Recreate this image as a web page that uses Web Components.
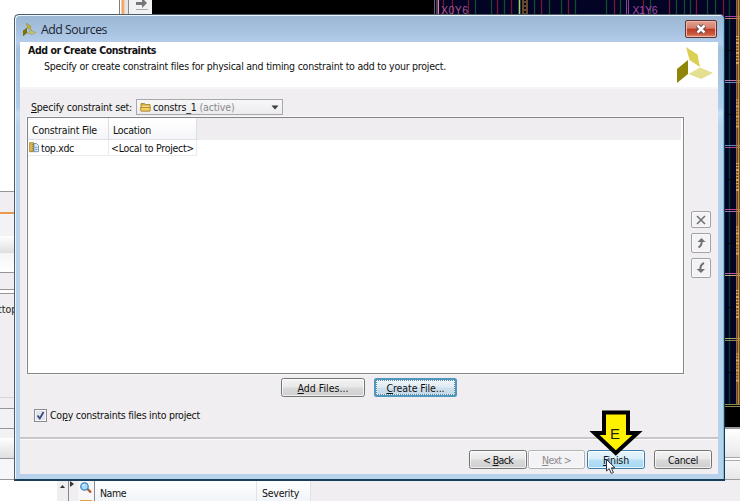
<!DOCTYPE html>
<html lang="en"><head><meta charset="utf-8"><title>Add Sources</title>
<style>
html,body{margin:0;padding:0}
body{width:740px;height:501px;overflow:hidden;background:#f0eef0;font-family:"DejaVu Sans Condensed","DejaVu Sans",sans-serif;font-stretch:condensed;font-size:10.5px;color:#111}
</style></head><body>
<app-desktop></app-desktop>
<script>
class Base extends HTMLElement{
  constructor(){super();this.attachShadow({mode:'open'});}
  connectedCallback(){this.shadowRoot.innerHTML='<style>*{box-sizing:border-box}:host{box-sizing:border-box;display:block}</style>'+this.view();this.ready&&this.ready();}
}
/* Single line of text, tracked so that it fills a given width */
customElements.define('ui-text',class extends Base{
  view(){return `<style>:host{display:inline-block;white-space:pre;line-height:14px;flex:none}</style><span><slot></slot></span>`}
  ready(){
    const w=+this.getAttribute('w');if(!w)return;
    const n=this.textContent.length,now=this.shadowRoot.querySelector('span').getBoundingClientRect().width;
    if(now)this.style.letterSpacing=((w-now)/n)+'px';
    this.style.width=w+'px';
  }
});
customElements.define('ui-button',class extends Base{
  view(){return `<style>
  :host{height:19px;border:1px solid #747376;border-radius:2.5px;background:linear-gradient(#f5f4f5,#e9e8e9 48%,#dbdadb 52%,#cfcecf);box-shadow:inset 0 0 0 1px #ffffffb0;display:flex;align-items:center;justify-content:center;flex:none}
  :host([disabled]){color:#8d8b8e;border-color:#b3b1b4;background:#f3f2f4}
  :host([hot]){border-color:#3c7fa8;background:linear-gradient(#e9f5fc,#d6edfa 48%,#b9e0f7 52%,#a6d5f0)}
  :host([focus]){border:2px solid #4f97bd;background:linear-gradient(#eff5fa,#dfebf4 48%,#cfe0ed 52%,#c5d9e8);outline:1px dotted #5b87a3;outline-offset:-3px}
  </style><slot></slot>`}
});
customElements.define('tool-button',class extends Base{
  view(){return `<style>:host{width:20px;height:20px;border:1px solid #a3a1a4;border-radius:2px;background:#f3f2f4;box-shadow:inset 0 0 0 1px #faf9fa;display:flex;align-items:center;justify-content:center}</style><slot></slot>`}
});
customElements.define('xilinx-mark',class extends Base{
  view(){return `<style>:host svg{display:block;width:100%;height:100%}</style><svg viewBox="0 0 36 36" preserveAspectRatio="none"><path d="M9 0L20.500 7.500L23 20L12.500 13Z" fill="#dcd052"/><path d="M0 22L11 13V27L0 36Z" fill="#8f8508"/><path d="M11.500 27L23 20.500L36 26L24 32Z" fill="#e5df90"/></svg>`}
});
customElements.define('title-bar',class extends Base{
  view(){return `<style>:host{height:27px;display:flex;align-items:center;padding:3px 0 0 1px;font:12.300px "Open Sans","Noto Sans",sans-serif;color:#1b2430}
  xilinx-mark{width:13px;height:13px;filter:saturate(1.2) brightness(.85) drop-shadow(0 0 .5px #443f00);margin:-1px 5px 0 2px}
  .x{margin:-2px 1px 0 auto;width:32px;height:18px;border:1px solid #593536;border-radius:2px;box-shadow:inset 0 0 0 1px #efb5a8;background:linear-gradient(#e3a08f,#d5806d 45%,#bd3b22 50%,#c9573c 80%,#dd8b69);display:flex;justify-content:center;align-items:center}</style>
  <xilinx-mark></xilinx-mark><ui-text w="66">Add Sources</ui-text><div class="x"><svg width="14" height="12" viewBox="0 0 14 12"><path d="M3.500 2.500l7 7M10.500 2.500l-7 7" stroke="#583d45" stroke-width="4.400"/><path d="M3.500 2.500l7 7M10.500 2.500l-7 7" stroke="#fff" stroke-width="2.500"/></svg></div>`}
});
customElements.define('page-header',class extends Base{
  view(){return `<style>:host{height:45px;background:#fff;display:flex;justify-content:space-between;padding:1px 5px 0 8px}
  b{font-size:10.500px;display:block;height:16px}.d{padding-left:16px}xilinx-mark{width:36px;height:36px;margin-top:4px}</style>
  <div><b><ui-text w="128">Add or Create Constraints</ui-text></b><div class="d"><ui-text w="402">Specify or create constraint files for physical and timing constraint to add to your project.</ui-text></div></div><xilinx-mark></xilinx-mark>`}
});
customElements.define('set-picker',class extends Base{
  view(){return `<style>:host{display:flex;align-items:center;height:30px;padding:8px 0 0 11px;border-top:2px solid #f6f5f7}
  .c{margin-left:4px;width:147px;height:16px;border:1px solid #aaa8ab;background:linear-gradient(#f8f7f8,#ececee);display:flex;align-items:center;padding:0 3px}
  .c svg{flex:none}.g{color:#8b898c}.a{margin-left:auto}</style>
  <ui-text w="101"><u>S</u>pecify constraint set:</ui-text>
  <div class="c"><svg width="11" height="10" viewBox="0 0 11 10" style="margin-right:2px"><path d="M1 3V1.500h3.500l1 1H10V9H1z" fill="#d6aa35" stroke="#9a741c" stroke-width=".7"/><path d="M1.800 3.700h7.500v1H1.800z" fill="#fff4b8"/><path d="M.5 5.500h10L9.800 9H1z" fill="#f3d264" stroke="#a77d1e" stroke-width=".7"/></svg><ui-text w="46.500">constrs_1 </ui-text><ui-text class="g" w="35">(active)</ui-text><svg class="a" width="8" height="5"><path d="M.5.5h7L4 4.500z" fill="#3b3b3f"/></svg></div>`}
});
customElements.define('file-table',class extends Base{
  view(){return `<style>:host{width:657px;height:257px;border:1px solid #858487;background:#fff;flex:none;box-shadow:0 0 0 1px #f8f7f8}
  .r{display:grid;grid-template-columns:81px 88px 1fr;align-items:center}
  .h{height:22px;background:#efedef;border-right:2px solid #fff}
  .h div{height:22px;padding:5px 0 0 4px;border-right:1px solid #dedde1;border-bottom:1px solid #e0dfe3;background:linear-gradient(#fff,#fbfbfc 45%,#f4f5f8)}
  .b{height:16px}.b div{height:16px;display:flex;align-items:center;padding-left:2px;border-right:1px solid #ebebed;border-bottom:1px solid #ebebed}</style>
  <div class="r h"><div><ui-text w="65">Constraint File</ui-text></div><div><ui-text w="38">Location</ui-text></div></div>
  <div class="r b"><div style="padding-left:1px"><svg width="11" height="11" viewBox="0 0 11 11" style="margin-right:1px"><path d="M.7.700h3.800v9H.7z" fill="#edc24d" stroke="#927020" stroke-width=".8"/><path d="M2.500 2.500h2M2.500 4.500h2M2.500 6.500h2M2.500 8.300h2" stroke="#8c6b1d" stroke-width=".7"/><path d="M5 1.500h2.500l2 2v6.200H5z" fill="#d9eafa" stroke="#5688b5" stroke-width=".8"/><path d="M6 5.500h2.500M6 7.500h2.500" stroke="#5688b5" stroke-width=".7"/></svg><ui-text w="33">top.xdc</ui-text></div><div style="padding-left:2px"><ui-text w="83">&lt;Local to Project&gt;</ui-text></div></div>`}
});
customElements.define('wizard-dialog',class extends Base{
  view(){return `<style>
  :host{width:711px;height:467px;border:1px solid #4d5c69;border-right-color:#123b55;border-bottom:2px solid #173f59;border-radius:5px 5px 0 0;padding:0 6px 6px 5px;box-shadow:inset 1px 1px 0 #eaf5fc,inset -1px 0 0 #74bfdc;
  background:linear-gradient(#9bb6d1,#a9c4e2 18px,#b3cdea 28px,#a3bfdd 35px,#b1cce9 92px,#c6dff5 98px,#b9d2ec 110px)}
  .body{height:387px;background:#f0eef0;display:flex;flex-direction:column}
  .mid{display:flex;padding-left:7px}
  .tools{width:33px;padding:94px 0 0 7px;display:flex;flex-direction:column;gap:5px}
  .tools tool-button:first-child{height:17px}
  .acts{display:flex;gap:9px;padding:4px 0 0 261px;height:34px}
  .chk{display:flex;align-items:center;gap:3px;padding-left:14px;height:14px}
  .box{width:13px;height:13px;border:1px solid #8b8b91;background:#e3e4e9;box-shadow:inset 0 0 0 1px #f7f7f9}
  .box svg{display:block}
  hr{margin:15px 0 0;border:0;height:3px;background:#c8c6c9;border-bottom:1px solid #fbfbfb;width:100%}
  .foot{display:flex;padding:10px 6px 0 0;justify-content:flex-end}
  </style>
  <title-bar></title-bar><page-header></page-header>
  <div class="body"><set-picker></set-picker>
   <div class="mid"><file-table></file-table><div class="tools">
    <tool-button><svg width="12" height="12" viewBox="0 0 12 12"><path d="M2 2l8 8M10 2l-8 8" stroke="#737175" stroke-width="1.600"/></svg></tool-button>
    <tool-button><svg width="12" height="14" viewBox="0 0 12 14"><path d="M3.500 11.500Q7.500 9 6.500 4" fill="none" stroke="#737175" stroke-width="2"/><path d="M2.500 6L6.500 2l4 4z" fill="#737175"/></svg></tool-button>
    <tool-button><svg width="12" height="14" viewBox="0 0 12 14"><path d="M9 2Q4.500 4 5.500 10" fill="none" stroke="#737175" stroke-width="2"/><path d="M1.500 8h8.500L6 12z" fill="#737175"/></svg></tool-button></div></div>
   <div class="acts"><ui-button style="width:84px"><ui-text w="51"><u>A</u>dd Files...</ui-text></ui-button><ui-button focus style="width:83px"><ui-text w="58"><u>C</u>reate File...</ui-text></ui-button></div>
   <div class="chk"><div class="box"><svg width="11" height="11"><path d="M2.500 5.500L4.800 8.500L8.500 2" fill="none" stroke="#34467e" stroke-width="1.700"/></svg></div><ui-text w="150">Co<u>p</u>y constraints files into project</ui-text></div>
   <hr><div class="foot"><ui-button style="width:58px"><ui-text w="30">&lt; <u>B</u>ack</ui-text></ui-button><ui-button disabled style="width:57px;margin-left:1px"><ui-text w="29"><u>N</u>ext &gt;</ui-text></ui-button><ui-button hot style="width:58px;margin-left:2px"><ui-text w="26"><u>F</u>inish</ui-text></ui-button><ui-button style="width:58px;margin-left:9px"><ui-text w="30">Cancel</ui-text></ui-button></div>
  </div>`}
});
/* Device floorplan: vertical routing columns and clock region edges */
customElements.define('device-view',class extends Base{
  view(){
    const r='#741a31',g='#134d2c';
    const cols=[[443,r],[452,r],[468,r],[475,g],[491,g],[497,r],[504,g],[511,r],[534,g],[541,r],[549,g],[561,g],[568,r],[575,g],[606,g],[614,r],[620,g],[643,r],[650,g],[669,r],[676,g],[684,g],[690,g],[696,r],[707,g],[715,g],[723,r]];
    const rows=[[16,'#a340a8','#b77a65'],[80,'#bd789f','#7180c0'],[145,'#6488bd','#b04889'],[209,'#bd4890','#9b73a4'],[273,'#bb599c','#c9a974'],[338,'#aba95c','#8d8854'],[404,'#898b3a','#89875c']];
    return `<style>:host{width:588px;height:428px;background:#000;overflow:hidden}svg{display:block}</style><svg width="588" height="428" viewBox="152 0 588 428" font-family="Liberation Sans" font-size="10.500">
    <rect x="435" width="305" height="404" fill="#030326"/><path d="M434.500 0V20" stroke="#62606a"/><path d="M437 0V20" stroke="#ad6981"/><path d="M438.500 0V20" stroke="#d48ca0"/>
    ${cols.map(c=>`<path d="M${c[0]+.5} 0V16" stroke="${c[1]}" stroke-width="1.300"/>`).join('')}
    <path d="M519.500 0V16" stroke="#9bd36c" stroke-width="1.600"/><path d="M523 0V16M527 0V16" stroke="#9e6d2c" stroke-width="1.300"/><path d="M525 1V16" stroke="#c19240" stroke-dasharray="2 2"/>
    <path d="M626.500 0V16M628.500 0V16" stroke="#8c4193"/>
    <path d="M729.500 0V404" stroke="#0b3a2b" stroke-width="1.500"/>
    ${rows.map(r=>`<path d="M725 ${r[0]+.5}H740" stroke="${r[1]}"/><path d="M725 ${r[0]+2.500}H740" stroke="${r[2]}"/><path d="M725 ${r[0]+34.500}H740" stroke="#00000c" stroke-width="1"/>`).join('')}
    <path d="M736.500 0V404" stroke="#9c6a2c" stroke-width="1"/><path d="M738.500 0V404" stroke="#cb8f3b" stroke-width="2"/><path d="M737.500 36V404" stroke="#dda650" stroke-width="3" stroke-dasharray="1 2 1 2 2 2 1 2 1 2 2 2 1 2 1 2 2 35.500"/>
    <text x="441" y="14" fill="#a5598b" textLength="27">X0Y6</text><text x="632.500" y="14" fill="#a649ac" textLength="25">X1Y6</text></svg>`}
});
customElements.define('side-strip',class extends Base{
  view(){return `<style>:host{width:14px;height:480px;overflow:hidden;background:#f0eef0;display:flex;flex-direction:column;font-size:10.500px;color:#222}div{flex:none}ui-text{margin-left:-2px}</style>
  <div style="height:191px;background:#fff"></div><div style="height:21px;border-top:1px solid #969597"></div><div style="height:2px;background:#e99a4d"></div><div style="height:22px;background:#f3f2f4"></div><div style="height:17px;background:linear-gradient(#fff,#dededf)"></div><div style="height:19px;background:linear-gradient(#f6f5f6,#fff)"></div><div style="height:17px;border-top:1px solid #969597"></div><div style="height:4px;border-top:1px solid #969597;background:#fff"></div><div style="height:104px;border-top:1px solid #969597;padding:8px 0 0 0"><ui-text>ttop</ui-text></div><div style="height:11px;border-top:1px solid #d6d5d7"></div><div style="height:20px;border-top:1px solid #969597;background:#f2f1f3"></div><div style="height:30px;border-top:1px solid #969597;background:linear-gradient(#f2f1f3 9px,#fff 9px,#dfdee0)"></div><div style="height:22px;border-top:1px solid #969597;background:#f7f6f8;border-bottom:1px solid #969597"></div>`}
});
customElements.define('message-list',class extends Base{
  view(){return `<style>:host{height:21px;display:flex;background:#f0eef0}.w{width:57px;background:#fff}.s{width:12px;border-right:1px solid #89888b;display:flex;justify-content:center;padding-top:4px}.t{width:9px}.i{width:17px;background:#f7f6f8;border-right:1px solid #89888b}.h{padding-left:5px;padding-top:6px;background:linear-gradient(#fff,#f1f4f8);border-right:1px solid #e2e2e5;height:21px}svg{display:block;flex:none}</style>
  <div class="w"></div><div class="s"><svg width="7" height="5"><path d="M1 4L3.500 1 6 4z" fill="#333"/></svg></div><div class="t"><svg width="6" height="8"><path d="M1 1v6l4-3z" fill="#333"/></svg></div>
  <div class="i"><svg width="17" height="21"><path d="M8.500 8L13 12.500" stroke="#b45b36" stroke-width="2.400"/><circle cx="6.500" cy="6.500" r="3.700" fill="#a9dcf8" stroke="#3f86c8" stroke-width="1.300"/><path d="M4.500 6l2-2" stroke="#fff"/><path d="M2 20h12v1H2z" fill="#d9a441"/></svg></div>
  <div class="h" style="width:162px"><ui-text w="26">Name</ui-text></div><div class="h" style="width:54px"><ui-text w="37">Severity</ui-text></div>`}
});
customElements.define('app-desktop',class extends Base{
  view(){return `<style>
  :host{position:relative;width:740px;height:501px;overflow:hidden;background:#f0eef0}
  side-strip,.tabs,device-view,.corner,message-list,wizard-dialog,.ptr,.tag{position:absolute}
  side-strip{left:0;top:0}.tabs{left:0;top:0;width:152px;height:15px;background:#fff;display:flex;justify-content:flex-end}
  .bar{width:10px;border-left:1px solid #7e7d80;border-right:1px solid #8a898c;background:linear-gradient(90deg,#fff 1px,#ee9c54 2px,#f4b47c 4px,#e7e5e8 5px)}
  .tool{width:23px;background:#f2f1f3;border-bottom:1px solid #fff}
  device-view{left:152px;top:0}.corner{left:725px;top:427px;width:15px;height:53px;border-top:2px solid #9a999c;border-bottom:1px solid #9c9b9e;background:linear-gradient(#fff,#ededef 22px,#e4e3e5 28px,#aaa 28px,#aaa 29px,#fff 29px,#fff 31px,#aaa 31px,#aaa 32px,#f7f6f8 32px,#e7e6e9)}
  message-list{left:0;top:480px;width:740px}wizard-dialog{left:14px;top:14px}.tag{left:589px;top:408px}.ptr{left:605px;top:458px}
  </style><side-strip></side-strip><div class="tabs"><div class="bar"></div><div class="tool"><svg width="20" height="14" style="display:block;margin-left:7px"><path d="M0 2h6v-4l5 5-5 5V5H0z" fill="#77767a"/><path d="M0 9.500h12" stroke="#aaa"/></svg></div></div>
  <device-view></device-view><div class="corner"></div><message-list></message-list><wizard-dialog></wizard-dialog>
  <svg class="tag" width="54" height="50" viewBox="0 0 54 50"><path d="M15 4.500H39V25H48.500L26.800 45L5.500 25H15Z" fill="#fff200" stroke="#000" stroke-width="4"/><text x="21" y="31" font-family="Liberation Sans" font-size="15.500" fill="#222" textLength="10" lengthAdjust="spacingAndGlyphs">E</text></svg>
  <svg class="ptr" width="14" height="18" viewBox="0 0 14 18"><path d="M1.500 1.500V13l2.700-2.400 2 4.800 2.200-.9-2-4.700H10z" fill="#fff" stroke="#33333a" stroke-width="1"/></svg>`}
});
</script></body></html>
